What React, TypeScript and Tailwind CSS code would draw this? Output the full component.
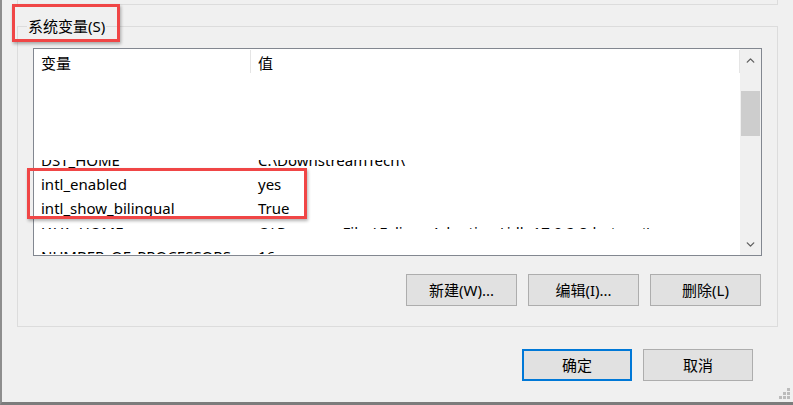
import { ChevronDown, ChevronUp } from "lucide-react";

const NAME_COL = "w-[217px] shrink-0 pl-[7px] whitespace-nowrap";
const VALUE_COL = "flex-1 pl-[7px] whitespace-nowrap";

const Row = ({ name, value }: { name: string; value: string }) => (
  <div className="flex h-[24px] leading-[24px]">
    <div className={NAME_COL}>{name}</div>
    <div className={VALUE_COL}>{value}</div>
  </div>
);

const WinButton = ({ label, primary, wide }: { label: string; primary?: boolean; wide?: boolean }) => (
  <button
    className={`${wide ? "w-[111px]" : "w-[110px]"} h-[32px] bg-[#e1e1e1] text-[15px] leading-none ${
      primary ? "border-2 border-[#0078d7]" : "border border-[#adadad]"
    }`}
  >
    {label}
  </button>
);

const VariableList = () => (
  <div className="flex w-[729px] h-[208px] bg-white border border-[#828790]">
    {/* Rows */}
    <div className="flex-1 flex flex-col">
      <div className="flex h-[24px] leading-[24px] pt-[1px]">
        <div className="w-[217px] shrink-0 pl-[7px] pt-[1px] border-r border-[#e5e5e5]">变量</div>
        <div className="flex-1 pl-[7px] pt-[1px] border-r border-[#e5e5e5]">值</div>
      </div>
      <div className="h-[87px]" />
      {/* partially repainted rows */}
      <div className="h-[12px] overflow-hidden">
        <div className="-mt-[12px]">
          <Row name="DST_HOME" value="C:\DownstreamTech\" />
        </div>
      </div>
      <div className="relative">
        <Row name="intl_enabled" value="yes" />
        <Row name="intl_show_bilingual" value="True" />
        <div className="absolute left-[-7px] top-[-4px] bottom-[1px] w-[280px] border-[3px] border-[#f04646] shadow-[1px_2px_3px_rgba(0,0,0,0.3)]" />
      </div>
      <div className="h-[24px]">
        <div className="h-[9px] overflow-hidden">
          <Row name="JAVA_HOME" value="C:\Program Files\Eclipse Adoptium\jdk-17.0.2.8-hotspot\" />
        </div>
      </div>
      <div className="h-[10px] overflow-hidden">
        <Row name="NUMBER_OF_PROCESSORS" value="16" />
      </div>
    </div>
    {/* Scrollbar */}
    <div className="w-[21px] shrink-0 flex flex-col bg-[#f0f0f0]">
      <div className="h-[22px] flex items-center justify-center">
        <ChevronUp className="w-[13px] h-[13px] text-[#606060]" strokeWidth={2.5} />
      </div>
      <div className="flex-1 px-px">
        <div className="mt-[20px] h-[45px] bg-[#cdcdcd]" />
      </div>
      <div className="h-[22px] flex items-center justify-center">
        <ChevronDown className="w-[13px] h-[13px] text-[#606060]" strokeWidth={2.5} />
      </div>
    </div>
  </div>
);

export default function App() {
  return (
    <div className="w-[793px] h-[405px] flex flex-col bg-[#f0f0f0] border-l-2 border-l-[#8e8e8e] border-b-[3px] border-b-[#7c7c7c] text-black text-[15px] font-['Noto_Sans','Noto_Sans_CJK_SC',sans-serif] overflow-hidden">
      {/* end of the group box above */}
      <div className="ml-[15px] w-[761px] h-[5px] shrink-0 border-x border-b border-[#dcdcdc]" />

      {/* System variables group */}
      <fieldset className="ml-[15px] mt-[11px] w-[761px] shrink-0 border border-[#dcdcdc] pt-[12px] pb-[20px]">
        <legend className="relative ml-[9px] px-px leading-[20px]">
          系统变量(S)
          <span className="absolute left-[-15px] right-[-14px] top-[-12px] bottom-[-6px] border-[3px] border-[#f04646] shadow-[1px_2px_3px_rgba(0,0,0,0.3)]" />
        </legend>
        <div className="pl-[15px]">
          <VariableList />
          <div className="flex justify-end gap-[11px] mt-[18px] w-[728px]">
            <WinButton label="新建(W)..." wide />
            <WinButton label="编辑(I)..." wide />
            <WinButton label="删除(L)" wide />
          </div>
        </div>
      </fieldset>

      {/* Dialog buttons */}
      <div className="flex justify-end gap-[11px] pr-[40px] mt-[22px]">
        <WinButton label="确定" primary />
        <WinButton label="取消" />
      </div>

      {/* Size grip */}
      <div className="flex-1 flex items-end justify-end pr-[3px] pb-[3px]">
        <svg width="11" height="11" viewBox="0 0 11 11">
          <rect x="8" y="0" width="3" height="3" fill="#bcbcbc" />
          <rect x="4" y="4" width="3" height="3" fill="#bcbcbc" />
          <rect x="8" y="4" width="3" height="3" fill="#bcbcbc" />
          <rect x="0" y="8" width="3" height="3" fill="#bcbcbc" />
          <rect x="4" y="8" width="3" height="3" fill="#bcbcbc" />
          <rect x="8" y="8" width="3" height="3" fill="#bcbcbc" />
        </svg>
      </div>
    </div>
  );
}
